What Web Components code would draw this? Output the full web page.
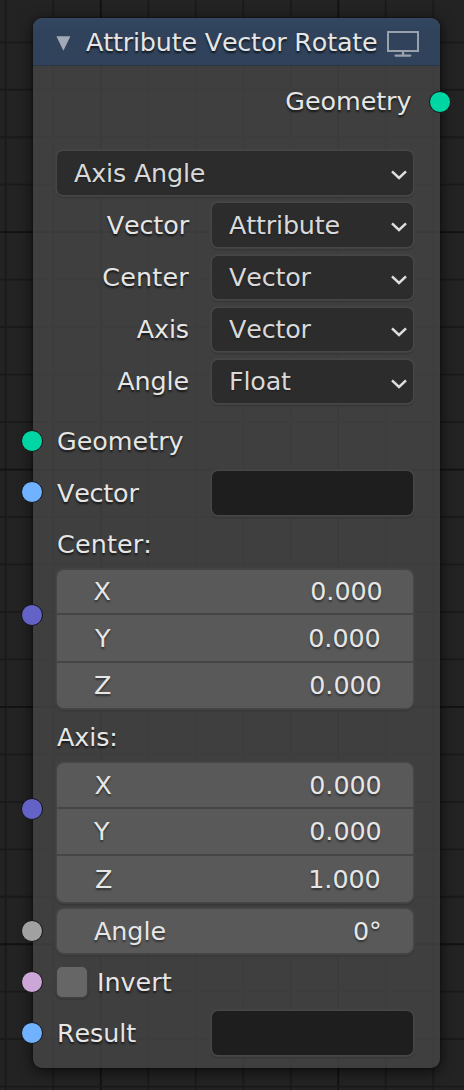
<!DOCTYPE html>
<html lang="en">
<head>
<meta charset="utf-8">
<title>Attribute Vector Rotate</title>
<style>
html, body { margin: 0; height: 100%; overflow: hidden; background: #232323; }
body { font: 25.4px/30px "DejaVu Sans", sans-serif; font-kerning: none; color: #e6e6e6; }
</style>
</head>
<body>
<node-canvas>
  <geo-node>
    <node-header slot="header">Attribute Vector Rotate</node-header>
    <node-row style="--h:44px;--mt:13px"><node-socket side="right" style="--c:#00d6a3;--dy:.5px"></node-socket><row-label class="end" style="--ls:-.05px">Geometry</row-label></node-row>
    <node-row style="--h:44px;--mt:28px"><drop-down>Axis Angle</drop-down></node-row>
    <node-row split style="--h:44px;--mt:8px"><row-label end>Vector</row-label><drop-down>Attribute</drop-down></node-row>
    <node-row split style="--h:43px;--mt:9px;--pb:1px"><row-label end style="--ls:.2px">Center</row-label><drop-down>Vector</drop-down></node-row>
    <node-row split style="--h:43px;--mt:9px;--pb:1px"><row-label end>Axis</row-label><drop-down>Vector</drop-down></node-row>
    <node-row split style="--h:43px;--mt:9px;--pb:1px"><row-label end>Angle</row-label><drop-down>Float</drop-down></node-row>
    <node-row style="--h:44px;--mt:16px"><node-socket style="--c:#00d6a3"></node-socket><row-label style="--ls:0px">Geometry</row-label></node-row>
    <node-row split style="--h:44px;--mt:8px"><node-socket style="--c:#70b2ff;--dy:-1px"></node-socket><row-label style="--ls:-.2px">Vector</row-label><text-field></text-field></node-row>
    <node-row style="--h:44px;--mt:7px"><row-label style="--ls:.15px">Center:</row-label></node-row>
    <node-row style="--h:138px;--mt:4px"><node-socket style="--c:#6363c7;--dy:-23.8px"></node-socket>
      <field-group>
        <number-field name="X" value="0.000" style="--h:43px;--pb:1px;--pl:36.5px;--pr:30.3px"></number-field>
        <number-field name="Y" value="0.000" style="--h:46px;--pl:38px;--pr:32.3px"></number-field>
        <number-field name="Z" value="0.000" style="--h:45px;--pb:1px;--pl:37px;--pr:31.3px"></number-field>
      </field-group>
    </node-row>
    <node-row style="--h:44px;--mt:7px"><row-label>Axis:</row-label></node-row>
    <node-row style="--h:139px;--mt:4px"><node-socket style="--c:#6363c7;--dy:-24px"></node-socket>
      <field-group>
        <number-field name="X" value="0.000" style="--h:44px;--pl:37.5px;--pr:31.3px"></number-field>
        <number-field name="Y" value="0.000" style="--h:45px;--pb:1px;--pl:37px;--pr:31.3px"></number-field>
        <number-field name="Z" value="1.000" style="--h:46px;--pl:38px;--pr:32.3px"></number-field>
      </field-group>
    </node-row>
    <node-row style="--h:44px;--mt:7px"><node-socket style="--c:#a1a1a1"></node-socket>
      <field-group><number-field name="Angle" value="0°" style="--h:44px;--pl:37px;--pr:31.3px"></number-field></field-group></node-row>
    <node-row style="--h:44px;--mt:7px"><node-socket style="--c:#cca6d6"></node-socket><check-box>Invert</check-box></node-row>
    <node-row split style="--h:44px;--mt:7px"><node-socket style="--c:#70b2ff"></node-socket><row-label>Result</row-label><text-field></text-field></node-row>
  </geo-node>
</node-canvas>
<script>
const define = (name, html, setup) => {
  const template = document.createElement('template');
  template.innerHTML = html;
  customElements.define(name, class extends HTMLElement {
    constructor() {
      super();
      this.attachShadow({ mode: 'open' }).append(template.content.cloneNode(true));
    }
    connectedCallback() { if (setup) setup(this, this.shadowRoot); }
  });
};

define('node-canvas', `<style>
:host { display: block; box-sizing: border-box; width: 464px; height: 1090px; padding: 18px 24px 22px 33px; overflow: hidden; position: relative; background: #232323; }
svg { position: absolute; left: 0; top: 0; }
</style><svg width="464" height="1090"></svg><slot></slot>`, (host, root) => {
  const svg = root.querySelector('svg');
  let lines = '';
  for (let i = 0; i < 10; i++) {
    const x = 5.8 + i * 47.5, major = i % 5 === 2;
    lines += `<path d="M${x} 0V1090" stroke="${major ? '#121212' : '#1a1a1a'}" stroke-width="1.8"/>`;
  }
  for (let i = 0; i < 23; i++) {
    const y = 42.3 + i * 47.47, major = i % 5 === 4;
    lines += `<path d="M0 ${y}H464" stroke="${major ? '#121212' : '#1a1a1a'}" stroke-width="1.8"/>`;
  }
  svg.innerHTML = lines;
});

define('geo-node', `<style>
:host { display: flex; flex-direction: column; box-sizing: border-box; width: 407px; height: 1050px; position: relative; border-radius: 9px; background: rgba(70,70,70,.8); box-shadow: 0 3px 14px 1px rgba(0,0,0,.6), 0 0 2px rgba(0,0,0,.6); }
main { display: flex; flex-direction: column; padding: 0 27px 0 24px; }
</style><slot name="header"></slot><main><slot></slot></main>`);

define('node-header', `<style>
:host { display: flex; align-items: center; box-sizing: border-box; height: 48px; padding: 0 21px 1px 23px; border-radius: 9px 9px 0 0; background: linear-gradient(rgba(50,73,103,.88), rgba(47,68,96,.88) 30%); border-bottom: 1px solid rgba(40,50,66,.8); white-space: nowrap; text-shadow: 0 2px 2px rgba(0,0,0,.7); letter-spacing: -.19px; }
.arrow { flex: none; width: 15px; height: 15px; margin: 4px 15px 0 0; }
.title { flex: 1 1 0; width: 0; padding-top: 1px; }
.screen { flex: none; width: 32px; height: 28px; margin-top: 5px; }
</style><svg class="arrow" viewBox="0 0 15 15"><path d="M.4.3H14.4L7.4 14.8Z" fill="#a3aab5"/></svg>
<span class="title"><slot></slot></span>
<svg class="screen" viewBox="0 0 32 28" fill="none" stroke="#99a1ad" stroke-width="2"><path d="M1 2H31V21H1Z"/><path d="M16 21V25.5" stroke-width="2.4"/><path d="M8.5 25.6H23.3" stroke-width="2.2" stroke-linecap="round"/></svg>`);

define('node-row', `<style>
:host { display: flex; align-items: center; position: relative; height: var(--h); margin-top: var(--mt); }
:host([split]) ::slotted(row-label) { flex: 0 0 132px; margin-right: 23px; }
</style><slot></slot>`);

define('node-socket', `<style>
:host { position: absolute; left: -36.3px; top: calc(50% - 11px + var(--dy, 0px)); box-sizing: border-box; width: 22px; height: 22px; border-radius: 50%; border: 1.5px solid #141414; background: var(--c); }
:host([side=right]) { left: auto; right: -37.7px; }
</style>`);

define('row-label', `<style>
:host { display: block; padding-bottom: var(--pb, 0px); letter-spacing: var(--ls, -.1px); white-space: nowrap; text-shadow: 0 2px 2px rgba(0,0,0,.65); }
:host([end]) { text-align: right; }
:host(.end) { flex: 1; text-align: right; padding-right: 1.5px; }
</style><slot></slot>`);

define('drop-down', `<style>
:host { display: flex; flex: 1; align-items: center; justify-content: space-between; height: 100%; box-sizing: border-box; padding: 0 6px 0 17px; border-radius: 6px; background: #2c2c2c; color: #d9d9d9; box-shadow: 0 0 0 1.7px #464646, 0 1.7px 0 1.7px #383838; white-space: nowrap; letter-spacing: -.17px; text-shadow: 0 1px 2px rgba(0,0,0,.4); }
span { padding-bottom: var(--pb, 0px); }
svg { width: 16px; height: 10px; margin-top: 4px; }
</style><span><slot></slot></span><svg viewBox="0 0 16 10"><path d="M1 1.3L8 8L15 1.3" fill="none" stroke="#dedede" stroke-width="2.5"/></svg>`);

define('text-field', `<style>
:host { display: block; flex: 1; height: 100%; border-radius: 6px; background: #1e1e1e; box-shadow: 0 0 0 1.7px #464646, 0 1.7px 0 1.7px #383838; }
</style>`);

define('field-group', `<style>
:host { display: flex; flex: 1; flex-direction: column; gap: 2px; height: 100%; border-radius: 7px; background: #454545; box-shadow: 0 0 0 1.7px #464646, 0 1.7px 0 1.7px #383838; }
::slotted(:first-child) { border-top-left-radius: 7px; border-top-right-radius: 7px; }
::slotted(:last-child) { border-bottom-left-radius: 7px; border-bottom-right-radius: 7px; }
</style><slot></slot>`);

define('number-field', `<style>
:host { display: flex; align-items: center; justify-content: space-between; box-sizing: border-box; height: var(--h); padding: 0 var(--pr) var(--pb, 0px) var(--pl); background: #595959; letter-spacing: -.05px; text-shadow: 0 2px 2px rgba(0,0,0,.45); }
</style><span class="name"></span><span class="value"></span>`, (host, root) => {
  root.querySelector('.name').textContent = host.getAttribute('name');
  root.querySelector('.value').textContent = host.getAttribute('value');
});

define('check-box', `<style>
:host { display: flex; align-items: center; gap: 10px; text-shadow: 0 2px 2px rgba(0,0,0,.65); }
i { width: 30px; height: 30px; border-radius: 5px; background: #666; box-shadow: 0 0 0 1.5px #404040, 0 1px 0 2px #383838; }
</style><i></i><span><slot></slot></span>`);
</script>
</body>
</html>
